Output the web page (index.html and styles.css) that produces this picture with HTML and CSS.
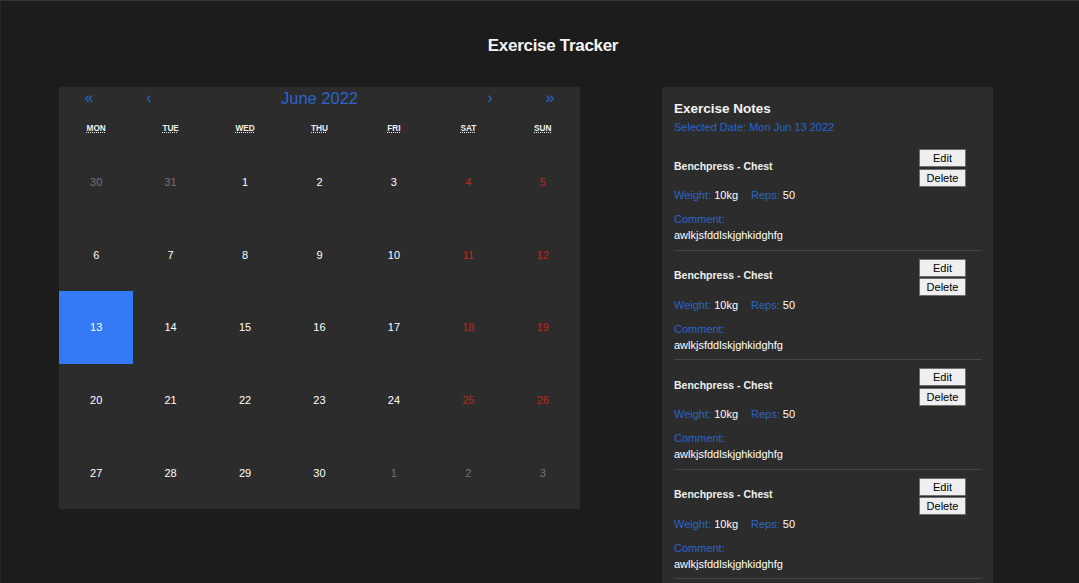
FILE: index.html
```html
<!DOCTYPE html>
<html lang="en">
<head>
<meta charset="utf-8">
<title>Exercise Tracker</title>
<link rel="stylesheet" href="styles.css">
</head>
<body>
<div class="app">
  <h1 class="title">Exercise Tracker</h1>
  <main class="main">
    <section class="calendar">
      <div class="cal-nav">
        <button class="nav-btn">«</button>
        <button class="nav-btn">‹</button>
        <span class="nav-label">June 2022</span>
        <button class="nav-btn">›</button>
        <button class="nav-btn">»</button>
      </div>
      <div class="weekdays">
        <div class="weekday"><abbr title="Monday">MON</abbr></div>
        <div class="weekday"><abbr title="Tuesday">TUE</abbr></div>
        <div class="weekday"><abbr title="Wednesday">WED</abbr></div>
        <div class="weekday"><abbr title="Thursday">THU</abbr></div>
        <div class="weekday"><abbr title="Friday">FRI</abbr></div>
        <div class="weekday"><abbr title="Saturday">SAT</abbr></div>
        <div class="weekday"><abbr title="Sunday">SUN</abbr></div>
      </div>
      <div class="days">
        <button class="tile neighbor">30</button>
        <button class="tile neighbor">31</button>
        <button class="tile">1</button>
        <button class="tile">2</button>
        <button class="tile">3</button>
        <button class="tile weekend">4</button>
        <button class="tile weekend">5</button>

        <button class="tile">6</button>
        <button class="tile">7</button>
        <button class="tile">8</button>
        <button class="tile">9</button>
        <button class="tile">10</button>
        <button class="tile weekend">11</button>
        <button class="tile weekend">12</button>

        <button class="tile active">13</button>
        <button class="tile">14</button>
        <button class="tile">15</button>
        <button class="tile">16</button>
        <button class="tile">17</button>
        <button class="tile weekend">18</button>
        <button class="tile weekend">19</button>

        <button class="tile">20</button>
        <button class="tile">21</button>
        <button class="tile">22</button>
        <button class="tile">23</button>
        <button class="tile">24</button>
        <button class="tile weekend">25</button>
        <button class="tile weekend">26</button>

        <button class="tile">27</button>
        <button class="tile">28</button>
        <button class="tile">29</button>
        <button class="tile">30</button>
        <button class="tile neighbor">1</button>
        <button class="tile neighbor">2</button>
        <button class="tile neighbor">3</button>
      </div>
    </section>

    <aside class="notes">
      <h2 class="notes-title">Exercise Notes</h2>
      <div class="selected-date">Selected Date: Mon Jun 13 2022</div>
      <div class="entries">
        <div class="entry">
          <div class="entry-head">
            <span class="entry-title">Benchpress - Chest</span>
            <div class="actions"><button class="btn">Edit</button><button class="btn">Delete</button></div>
          </div>
          <div class="stats"><span class="label">Weight:</span> <span class="stat">10kg</span><span class="label">Reps:</span> 50</div>
          <div class="label comment-label">Comment:</div>
          <div class="comment-text">awlkjsfddlskjghkidghfg</div>
        </div>
        <div class="entry">
          <div class="entry-head">
            <span class="entry-title">Benchpress - Chest</span>
            <div class="actions"><button class="btn">Edit</button><button class="btn">Delete</button></div>
          </div>
          <div class="stats"><span class="label">Weight:</span> <span class="stat">10kg</span><span class="label">Reps:</span> 50</div>
          <div class="label comment-label">Comment:</div>
          <div class="comment-text">awlkjsfddlskjghkidghfg</div>
        </div>
        <div class="entry">
          <div class="entry-head">
            <span class="entry-title">Benchpress - Chest</span>
            <div class="actions"><button class="btn">Edit</button><button class="btn">Delete</button></div>
          </div>
          <div class="stats"><span class="label">Weight:</span> <span class="stat">10kg</span><span class="label">Reps:</span> 50</div>
          <div class="label comment-label">Comment:</div>
          <div class="comment-text">awlkjsfddlskjghkidghfg</div>
        </div>
        <div class="entry">
          <div class="entry-head">
            <span class="entry-title">Benchpress - Chest</span>
            <div class="actions"><button class="btn">Edit</button><button class="btn">Delete</button></div>
          </div>
          <div class="stats"><span class="label">Weight:</span> <span class="stat">10kg</span><span class="label">Reps:</span> 50</div>
          <div class="label comment-label">Comment:</div>
          <div class="comment-text">awlkjsfddlskjghkidghfg</div>
        </div>
      </div>
    </aside>
  </main>
</div>
</body>
</html>
```

FILE: styles.css
```css
html, body {
  margin: 0;
  height: 100%;
  overflow: hidden;
  background: #1c1c1c;
}

body {
  box-sizing: border-box;
  border-top: 1px solid #343434;
  border-left: 1px solid #262626;
  font-family: "Liberation Sans", Arial, sans-serif;
  color: #ffffff;
}

.title {
  margin: 0;
  padding: 34px 0 0 26px;
  text-align: center;
  font-size: 17px;
  line-height: 22px;
  font-weight: bold;
  letter-spacing: -0.3px;
  color: #f4f4f4;
}

.main {
  display: flex;
  align-items: flex-start;
  gap: 82px;
  margin-top: 30px;
  padding-left: 58px;
}

/* Calendar */
.calendar {
  width: 521px;
  height: 422px;
  background: #2c2c2c;
  display: flex;
  flex-direction: column;
}

.cal-nav {
  display: flex;
  height: 22px;
}

.nav-btn {
  width: 60px;
  padding: 0;
  border: 0;
  background: none;
  color: #2a64cc;
  font-family: inherit;
  font-size: 16px;
  line-height: 22px;
}

.nav-label {
  flex: 1;
  text-align: center;
  color: #2a64cc;
  font-size: 16.5px;
  line-height: 22px;
}

.weekdays {
  display: grid;
  grid-template-columns: repeat(7, 1fr);
  height: 36.6px;
  align-items: center;
  padding-top: 3px;
  box-sizing: border-box;
}

.weekday {
  text-align: center;
  font-size: 8.25px;
  font-weight: bold;
  color: #f0f0f0;
}

.weekday abbr {
  text-decoration: underline dotted;
}

.days {
  flex: 1;
  display: grid;
  grid-template-columns: repeat(7, 1fr);
  grid-template-rows: repeat(5, 1fr);
}

.tile {
  padding: 0;
  border: 0;
  background: none;
  color: #ffffff;
  font-family: inherit;
  font-size: 11px;
}

.tile.weekend {
  color: #c0271c;
}

.tile.neighbor {
  color: #757575;
}

.tile.active {
  background: #3479f6;
  color: #ffffff;
}

/* Notes */
.notes {
  width: 331px;
  box-sizing: border-box;
  padding: 12px 11px 40px 12px;
  background: #2c2c2c;
}

.notes-title {
  margin: 0;
  font-size: 13.5px;
  line-height: 20px;
  font-weight: bold;
  color: #f4f4f4;
}

.selected-date {
  margin-top: 1px;
  font-size: 11px;
  line-height: 14px;
  color: #2a64cc;
}

.entries {
  margin-top: 7px;
}

.entry {
  padding: 8px 16px 7.5px 0;
  border-bottom: 1px solid #444444;
  font-size: 11px;
}

.entry-head {
  display: flex;
  justify-content: space-between;
  align-items: flex-start;
}

.entry-title {
  margin-top: 9.5px;
  font-size: 10.5px;
  line-height: 14px;
  font-weight: bold;
  color: #f0f0f0;
}

.actions {
  display: flex;
  flex-direction: column;
  gap: 1.5px;
}

.btn {
  width: 47px;
  height: 18px;
  padding: 0;
  box-sizing: border-box;
  border: 1px solid #6f6f6f;
  border-radius: 1px;
  background: #efefef;
  color: #000000;
  font-family: inherit;
  font-size: 11px;
  line-height: 16px;
}

.stats {
  margin-top: 1.5px;
  line-height: 14px;
}

.label {
  color: #2a64cc;
}

.stat {
  margin-right: 13px;
}

.comment-label {
  margin-top: 10px;
  line-height: 14px;
}

.comment-text {
  margin-top: 2px;
  line-height: 14px;
}
```
